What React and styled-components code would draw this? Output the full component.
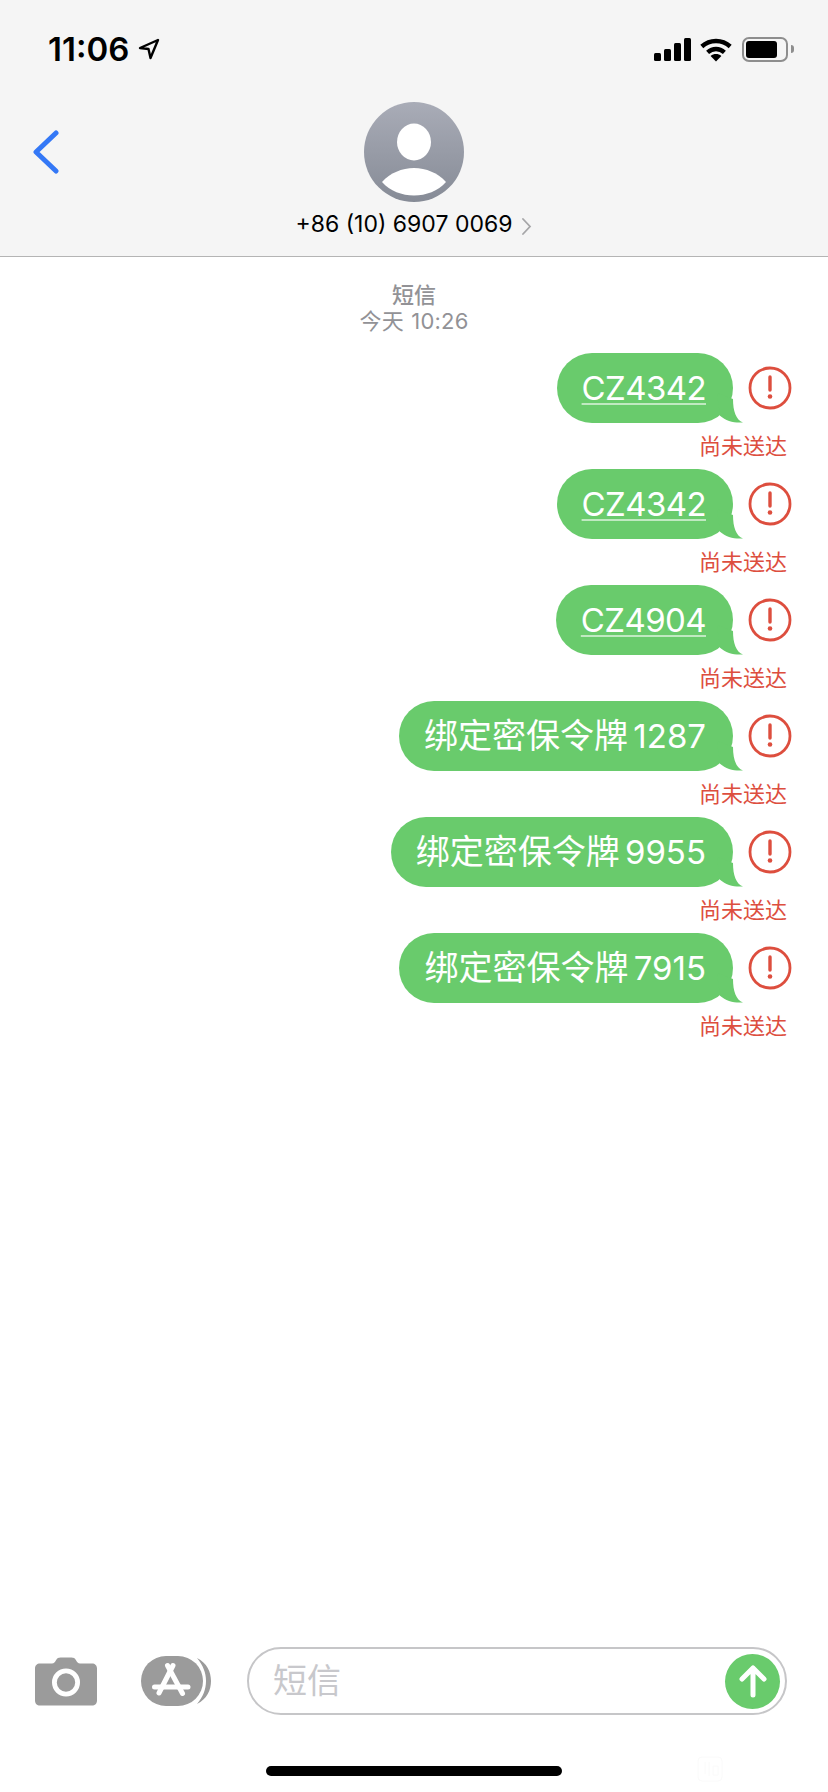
import React from "react";
import styled, { createGlobalStyle } from "styled-components";

const Global = createGlobalStyle`
  html, body { margin: 0; padding: 0; background: #fff; }
  body { font-family: Inter, "Noto Sans CJK SC", sans-serif; }
`;

const CJK = `Inter, "Noto Sans CJK SC", sans-serif`;
const GREEN = "#69cb6c";
const RED = "#dd4e3e";

const Phone = styled.div`
  width: 828px;
  height: 1792px;
  display: flex;
  flex-direction: column;
  overflow: hidden;
  background: #fff;
`;
const Header = styled.header`
  height: 257px;
  box-sizing: border-box;
  flex: none;
  background: #f5f5f5;
  border-bottom: 1px solid #b4b4b4;
  display: flex;
  flex-direction: column;
`;
const StatusBar = styled.div`
  height: 102px;
  box-sizing: border-box;
  padding: 34px 40px 0 48px;
  display: flex;
  align-items: flex-start;
  justify-content: space-between;
`;
const TimeGroup = styled.div`
  display: flex;
  align-items: center;
  gap: 9px;
`;
const Clock = styled.span`
  font: 600 33px/30px ${CJK};
  color: #000;
`;
const StatusIcons = styled.div`
  display: flex;
  align-items: center;
  gap: 9px;
  height: 30px;
`;
const Signal = styled.div`
  display: flex;
  align-items: flex-end;
  gap: 3px;
  height: 23px;
`;
const SignalBar = styled.i`
  display: block;
  width: 7px;
  height: ${(p) => p.$h}px;
  background: #000;
  border-radius: 1.5px;
`;
const Battery = styled.div`
  width: 46px;
  height: 25px;
  box-sizing: border-box;
  border: 2px solid #8e8e8e;
  border-radius: 7px;
  padding: 2px;
  margin-left: 1px;
  position: relative;
  &::after {
    content: "";
    position: absolute;
    right: -8px;
    top: 6px;
    width: 3px;
    height: 8px;
    border-radius: 0 3px 3px 0;
    background: #8e8e8e;
  }
`;
const BatteryFill = styled.div`
  width: 31px;
  height: 100%;
  background: #000;
  border-radius: 3px;
`;
const NavRow = styled.div`
  display: grid;
  grid-template-columns: 1fr 100px 1fr;
  align-items: center;
  height: 100px;
`;
const BackButton = styled.div`
  padding-left: 33px;
  display: flex;
`;
const ContactLine = styled.div`
  height: 44px;
  display: flex;
  align-items: center;
  justify-content: center;
  gap: 9px;
  font: 400 23px/44px ${CJK};
  color: #000;
`;
const ContactArrow = styled.svg`
  margin-top: 3px;
`;
const Messages = styled.main`
  flex: 1;
  display: flex;
  flex-direction: column;
  padding-top: 25px;
`;
const Stamp = styled.div`
  text-align: center;
  font: 400 22px/26px ${CJK};
  color: #929296;
  margin-bottom: 19px;
`;
const Service = styled.div`
  font-weight: 500;
`;
const StampTime = styled.div`
  word-spacing: 1px;
  letter-spacing: 0.2px;
`;
const MessageBlock = styled.div`
  display: flex;
  flex-direction: column;
  align-items: flex-end;
`;
const MessageRow = styled.div`
  display: flex;
  align-items: center;
  gap: 15px;
  padding-right: 36px;
`;
const Bubble = styled.div`
  position: relative;
  height: 70px;
  box-sizing: border-box;
  padding: 0 27px 0 25px;
  display: flex;
  align-items: center;
  background: ${GREEN};
  border-radius: 35px;
  color: #fff;
  font: 400 33px/70px ${CJK};
  white-space: pre;
`;
const LinkText = styled.span`
  text-decoration: underline;
  text-decoration-color: #c0e9c1;
  text-decoration-thickness: 1.5px;
  text-underline-offset: 3px;
  letter-spacing: -0.6px;
`;
const PlainText = styled.span`
  word-spacing: -4px;
`;
const Hanzi = styled.span`
  font-size: 34px;
`;
const Tail = styled.svg`
  position: absolute;
  right: -10px;
  bottom: 0;
`;
const Status = styled.div`
  height: 46px;
  padding-right: 41px;
  font: 400 22px/47px ${CJK};
  color: ${RED};
`;
const Composer = styled.div`
  flex: none;
  display: flex;
  align-items: center;
  padding: 0 41px 0 35px;
  height: 68px;
`;
const CameraSlot = styled.div`
  width: 62px;
  margin-right: 44px;
  display: flex;
`;
const AppSlot = styled.div`
  width: 70px;
  margin-right: 36px;
  display: flex;
`;
const InputPill = styled.div`
  flex: 1;
  height: 68px;
  box-sizing: border-box;
  border: 2px solid #c6c6c8;
  border-radius: 34px;
  display: flex;
  align-items: center;
  justify-content: space-between;
  padding: 0 5px 0 24px;
`;
const Placeholder = styled.span`
  font: 400 34px/1 ${CJK};
  color: #c8c8cc;
`;
const SendButton = styled.div`
  width: 55px;
  height: 55px;
  border-radius: 50%;
  background: ${GREEN};
  display: flex;
  align-items: center;
  justify-content: center;
`;
const HomeArea = styled.div`
  flex: none;
  height: 77px;
  box-sizing: border-box;
  padding-top: 51px;
  position: relative;
  display: flex;
  justify-content: center;
`;
const HomeBar = styled.div`
  width: 296px;
  height: 10px;
  border-radius: 5px;
  background: #000;
`;
const Watermark = styled.svg`
  position: absolute;
  left: 697px;
  top: 41px;
`;

const messages = [
  { text: "CZ4342", link: true },
  { text: "CZ4342", link: true },
  { text: "CZ4904", link: true },
  { text: "1287" },
  { text: "9955" },
  { text: "7915" },
];

const LocationArrow = () => (
  <svg width="22" height="22" viewBox="0 0 22 22">
    <path d="M20 2 L2 10 L10.5 11 L12.5 20 Z" fill="none" stroke="#000" strokeWidth="2.4" strokeLinejoin="round" />
  </svg>
);

const Wifi = () => (
  <svg width="32" height="25" viewBox="0 0 32 25">
    <g fill="none" stroke="#000" strokeWidth="4.4">
      <path d="M1.8 9.5 C9.8 2.2 22.2 2.2 30.2 9.5" />
      <path d="M7.6 15.3 C12.6 10.8 19.4 10.8 24.4 15.3" />
    </g>
    <path d="M16 24.5 L10.6 19 C13.8 16.4 18.2 16.4 21.4 19 Z" fill="#000" />
  </svg>
);

const BackChevron = () => (
  <svg width="26" height="44" viewBox="0 0 26 44">
    <path d="M23 3 L3 22 L23 41" fill="none" stroke="#3478f6" strokeWidth="5" strokeLinecap="round" strokeLinejoin="round" />
  </svg>
);

const Avatar = () => (
  <svg width="100" height="100" viewBox="0 0 100 100">
    <defs>
      <linearGradient id="av" x1="0" y1="0" x2="0" y2="1">
        <stop offset="0" stopColor="#a9acb7" />
        <stop offset="1" stopColor="#868b96" />
      </linearGradient>
    </defs>
    <circle cx="50" cy="50" r="50" fill="url(#av)" />
    <ellipse cx="50" cy="40" rx="17" ry="18.5" fill="#fff" />
    <path d="M18 80 C26 71 38 66 50 66 C62 66 74 71 82 80 C74 89 62 93.5 50 93.5 C38 93.5 26 89 18 80 Z" fill="#fff" />
  </svg>
);

const SmallChevron = () => (
  <ContactArrow width="11" height="18" viewBox="0 0 11 18">
    <path d="M2 2 L9 9.5 L2 17" fill="none" stroke="#a6a6a8" strokeWidth="1.8" strokeLinecap="round" />
  </ContactArrow>
);

const ErrorIcon = () => (
  <svg width="44" height="44" viewBox="0 0 44 44">
    <circle cx="22" cy="22" r="20" fill="none" stroke={RED} strokeWidth="2.8" />
    <path d="M22 11 L22 24" stroke={RED} strokeWidth="3.4" strokeLinecap="round" />
    <circle cx="22" cy="30.5" r="2.3" fill={RED} />
  </svg>
);

const BubbleTail = () => (
  <Tail width="30" height="30" viewBox="0 0 30 30">
    <path d="M4 0 L20 6 C20 18 23 27 30 29.4 C22 30.3 13 28 7 22.7 Z" fill={GREEN} />
  </Tail>
);

const Camera = () => (
  <svg width="62" height="49" viewBox="0 0 62 49">
    <path d="M5 6.5 H17 C19 6.5 20 5 21 3.2 C22 1.2 23.5 0.5 25.5 0.5 H36.5 C38.5 0.5 40 1.2 41 3.2 C42 5 43 6.5 45 6.5 H57 C60 6.5 62 8.5 62 11.5 V43.5 C62 46.5 60 48.5 57 48.5 H5 C2 48.5 0 46.5 0 43.5 V11.5 C0 8.5 2 6.5 5 6.5 Z" fill="#9b9b9b" />
    <circle cx="31" cy="25.5" r="11.6" fill="none" stroke="#fff" strokeWidth="4.8" />
  </svg>
);

const AppStore = () => (
  <svg width="70" height="50" viewBox="0 0 70 50">
    <path d="M56 2 C66 7 70 16 70 25 C70 34 66 43 56 48 C62 41 65 33 65 25 C65 17 62 9 56 2 Z" fill="#9b9b9b" />
    <rect x="0" y="0" width="62" height="50" rx="25" fill="#9b9b9b" />
    <g stroke="#fff" strokeWidth="5" strokeLinecap="round" fill="none">
      <path d="M32 9.5 L18 37" />
      <path d="M26.5 9.5 L41.5 37.5" />
      <path d="M13.5 31 H47" />
    </g>
  </svg>
);

const UpArrow = () => (
  <svg width="30" height="34" viewBox="0 0 30 34">
    <path d="M15 31 V4 M4 15 L15 4 L26 15" fill="none" stroke="#fff" strokeWidth="5" strokeLinecap="round" strokeLinejoin="round" />
  </svg>
);

export default function App() {
  return (
    <Phone>
      <Global />
      <Header>
        <StatusBar>
          <TimeGroup>
            <Clock>11:06</Clock>
            <LocationArrow />
          </TimeGroup>
          <StatusIcons>
            <Signal>
              {[8, 12, 18, 23].map((h) => (
                <SignalBar key={h} $h={h} />
              ))}
            </Signal>
            <Wifi />
            <Battery>
              <BatteryFill />
            </Battery>
          </StatusIcons>
        </StatusBar>
        <NavRow>
          <BackButton>
            <BackChevron />
          </BackButton>
          <Avatar />
        </NavRow>
        <ContactLine>
          <span>+86 (10) 6907 0069</span>
          <SmallChevron />
        </ContactLine>
      </Header>
      <Messages>
        <Stamp>
          <Service>短信</Service>
          <StampTime>今天 10:26</StampTime>
        </Stamp>
        {messages.map((m, i) => (
          <MessageBlock key={i}>
            <MessageRow>
              <Bubble>
                {m.link ? (
                  <LinkText>{m.text}</LinkText>
                ) : (
                  <PlainText>
                    <Hanzi>绑定密保令牌</Hanzi> {m.text}
                  </PlainText>
                )}
                <BubbleTail />
              </Bubble>
              <ErrorIcon />
            </MessageRow>
            <Status>尚未送达</Status>
          </MessageBlock>
        ))}
      </Messages>
      <Composer>
        <CameraSlot>
          <Camera />
        </CameraSlot>
        <AppSlot>
          <AppStore />
        </AppSlot>
        <InputPill>
          <Placeholder>短信</Placeholder>
          <SendButton>
            <UpArrow />
          </SendButton>
        </InputPill>
      </Composer>
      <HomeArea>
        <HomeBar />
        <Watermark width="26" height="26" viewBox="0 0 26 26">
          <rect x="1" y="1" width="24" height="24" rx="4" fill="none" stroke="#fafafa" strokeWidth="1" />
          <path d="M8 6 V18 M12 6 V20 M16 10 H21 V19 H16 Z" fill="none" stroke="#fafafa" strokeWidth="1" />
        </Watermark>
      </HomeArea>
    </Phone>
  );
}
